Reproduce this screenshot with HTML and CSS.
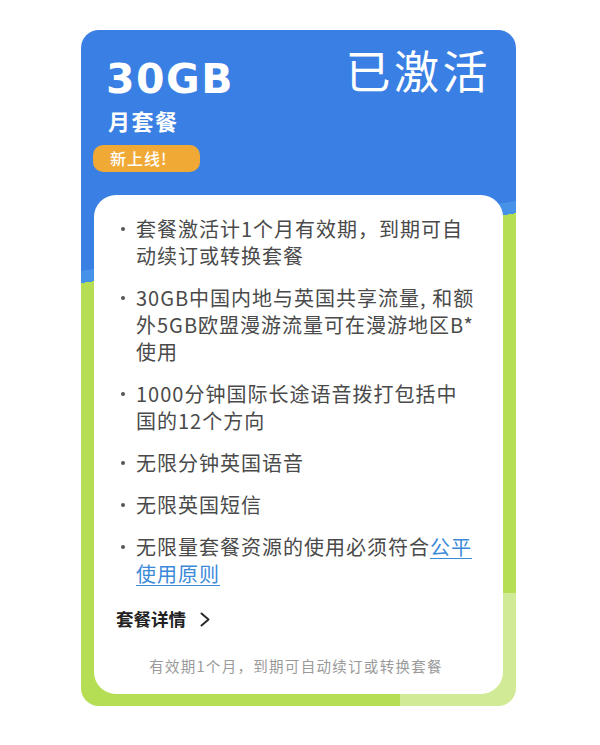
FILE: index.html
```html
<!DOCTYPE html>
<html lang="zh-CN">
<head>
<meta charset="utf-8">
<title>30GB 月套餐</title>
<link rel="stylesheet" href="styles.css">
</head>
<body>
<div class="card">
  <div class="head">
    <div class="head-left">
      <div class="size">30GB</div>
      <div class="plan">月套餐</div>
      <div class="badge">新上线!</div>
    </div>
    <div class="status">已激活</div>
  </div>
  <div class="panel">
    <ul class="features">
      <li><span>套餐激活计1个月有效期，到期可自动续订或转换套餐</span></li>
      <li><span>30GB中国内地与英国共享流量, 和额外5GB欧盟漫游流量可在漫游地区B*使用</span></li>
      <li><span>1000分钟国际长途语音拨打包括中国的12个方向</span></li>
      <li><span>无限分钟英国语音</span></li>
      <li><span>无限英国短信</span></li>
      <li><span>无限量套餐资源的使用必须符合<a class="link" href="#">公平使用原则</a></span></li>
    </ul>
    <a class="details" href="#">套餐详情<svg class="chev" width="11" height="15" viewBox="0 0 11 15"><polyline points="1.5,1.5 8.5,7.5 1.5,13.5" fill="none" stroke="#2a2a2a" stroke-width="2" stroke-linecap="round" stroke-linejoin="round"/></svg></a>
    <p class="note">有效期1个月，到期可自动续订或转换套餐</p>
  </div>
</div>
</body>
</html>
```

FILE: styles.css
```css
html, body {
  margin: 0;
  padding: 0;
  background: #ffffff;
}

body {
  font-family: "Noto Sans CJK SC", "Noto Sans", sans-serif;
}

.card {
  box-sizing: border-box;
  width: 435px;
  height: 676px;
  margin: 30px 0 0 81px;
  padding: 0 13px 12px;
  border-radius: 18px;
  display: flex;
  flex-direction: column;
  background:
    linear-gradient(#d0ea96, #d0ea96) right bottom / 116px 113px no-repeat,
    linear-gradient(170.86deg, #3a7fe3 0, #3a7fe3 238px, #4592e8 238px, #4592e8 250px, #b6de55 250px);
}

.head {
  height: 165px;
  box-sizing: border-box;
  padding-top: 29px;
  display: flex;
  justify-content: space-between;
  align-items: flex-start;
  color: #ffffff;
}

.head-left {
  display: flex;
  flex-direction: column;
  align-items: flex-start;
}

.size {
  font-family: "DejaVu Sans", "Liberation Sans", sans-serif;
  font-weight: 700;
  font-size: 41px;
  line-height: 41px;
  letter-spacing: 1.5px;
  margin-left: 12px;
}

.plan {
  font-weight: 700;
  font-size: 22px;
  line-height: 24px;
  letter-spacing: 1.5px;
  margin: 8px 0 0 14px;
}

.badge {
  box-sizing: border-box;
  width: 107px;
  height: 27px;
  margin: 13px 0 0 -1px;
  padding-left: 17px;
  border-radius: 10px;
  background: #f0a935;
  font-size: 16px;
  font-weight: 500;
  line-height: 27px;
  letter-spacing: 1px;
}

.status {
  font-size: 45px;
  line-height: 46px;
  font-weight: 400;
  letter-spacing: 3.5px;
  margin: -12px 12px 0 0;
}

.panel {
  flex: 1;
  display: flex;
  flex-direction: column;
  background: #ffffff;
  border-radius: 22px;
  padding: 20px 27px 18px 22px;
}

.features {
  list-style: none;
  margin: 0;
  padding: 0;
}

.features li {
  display: flex;
  font-size: 20px;
  line-height: 27px;
  letter-spacing: 1px;
  color: #4a4a4a;
  margin-bottom: 15px;
}

.features li:last-child {
  margin-bottom: 0;
}

.features li::before {
  content: "";
  flex: none;
  width: 4px;
  height: 4px;
  border-radius: 50%;
  background: #555555;
  margin: 12px 11px 0 5px;
}

.features li span {
  flex: 1;
}

.link {
  color: #3b8ad9;
  text-decoration: underline;
  text-underline-offset: 3px;
  text-decoration-thickness: 1px;
}

.details {
  display: flex;
  align-items: center;
  align-self: flex-start;
  margin-top: 20px;
  font-size: 17.5px;
  font-weight: 700;
  line-height: 24px;
  color: #222222;
  text-decoration: none;
}

.chev {
  margin-left: 14px;
}

.note {
  margin: auto 0 0;
  text-align: center;
  font-size: 14.5px;
  line-height: 20px;
  letter-spacing: 1.3px;
  color: #9a9a9a;
}
```
